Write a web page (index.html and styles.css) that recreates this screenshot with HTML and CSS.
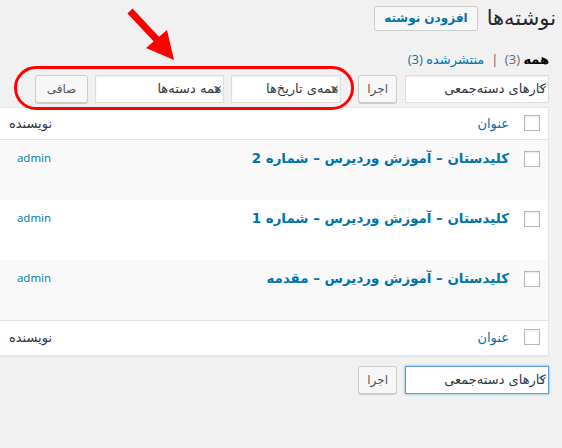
FILE: index.html
```html
<!DOCTYPE html>
<html lang="fa" dir="rtl">
  <head>
    <meta charset="UTF-8" />
    <title>نوشته‌ها</title>
    <link rel="stylesheet" href="styles.css">
  </head>
  <body>
    <div class="wrap">
      <div class="page-head">
        <h1>نوشته‌ها</h1>
        <a class="title-action" href="#">افزودن نوشته</a>
      </div>

      <ul class="subsubsub">
        <li><b>همه</b> <span class="count">(3)</span> <span class="sep">|</span></li>
        <li><a href="#">منتشرشده <span class="num">(3)</span></a></li>
      </ul>

      <div class="tablenav">
        <div class="select bulk">کارهای دسته‌جمعی</div>
        <button type="button" class="btn">اجرا</button>
        <div class="filters">
          <div class="select date">همه‌ی تاریخ‌ها</div>
          <div class="select cat">همه دسته‌ها</div>
          <button type="button" class="btn btn-filter">صافی</button>
        </div>
      </div>

      <table class="posts">
        <thead>
          <tr>
            <td class="col-cb"><span class="cb"></span></td>
            <th class="col-title"><a href="#">عنوان</a></th>
            <th class="col-author">نویسنده</th>
          </tr>
        </thead>
        <tbody>
          <tr class="alt">
            <td class="col-cb"><span class="cb"></span></td>
            <td class="col-title"><a class="row-title" href="#">کلیدستان – آموزش وردیرس – شماره 2</a></td>
            <td class="col-author"><a href="#">admin</a></td>
          </tr>
          <tr>
            <td class="col-cb"><span class="cb"></span></td>
            <td class="col-title"><a class="row-title" href="#">کلیدستان – آموزش وردیرس – شماره 1</a></td>
            <td class="col-author"><a href="#">admin</a></td>
          </tr>
          <tr class="alt">
            <td class="col-cb"><span class="cb"></span></td>
            <td class="col-title"><a class="row-title" href="#">کلیدستان – آموزش وردیرس – مقدمه</a></td>
            <td class="col-author"><a href="#">admin</a></td>
          </tr>
        </tbody>
        <tfoot>
          <tr>
            <td class="col-cb"><span class="cb"></span></td>
            <th class="col-title"><a href="#">عنوان</a></th>
            <th class="col-author">نویسنده</th>
          </tr>
        </tfoot>
      </table>

      <div class="tablenav bottom">
        <div class="select bulk focus">کارهای دسته‌جمعی</div>
        <button type="button" class="btn">اجرا</button>
      </div>
    </div>

    <!-- red annotation drawn over the screenshot -->
    <svg class="markup" width="562" height="120" viewBox="0 0 562 120">
      <rect x="15.5" y="67.5" width="337" height="41" rx="20.5" fill="none" stroke="#f00" stroke-width="3" />
      <line x1="130" y1="11" x2="160" y2="43" stroke="#f00" stroke-width="7" />
      <polygon points="174,60 167,30 146,48" fill="#f00" />
    </svg>
  </body>
</html>
```

FILE: styles.css
```css
body {
  margin: 0;
  background: #f1f1f1;
  color: #444;
  font-family: "Open Sans", "DejaVu Sans", sans-serif;
  font-size: 13px;
  direction: rtl;
  position: relative;
  overflow: hidden;
}
a {
  color: #0073aa;
  text-decoration: none;
}
.wrap {
  margin: 0 13px 0 0;
}
.page-head {
  display: flex;
  align-items: center;
  margin-right: -7px;
  padding-top: 5px;
}
h1 {
  margin: 0 0 0 9px;
  font-family: "DejaVu Sans", sans-serif;
  font-size: 21px;
  font-weight: normal;
  line-height: 27px;
  color: #23282d;
}
.title-action {
  display: inline-block;
  padding: 0 9px;
  height: 23px;
  line-height: 23px;
  border: 1px solid #ccc;
  border-radius: 2px;
  background: #f7f7f7;
  font-family: "DejaVu Sans", sans-serif;
  font-weight: bold;
  font-size: 12px;
}
.subsubsub {
  list-style: none;
  margin: 18px 0 0;
  padding: 0;
  display: flex;
  gap: 4px;
  font-size: 13px;
  line-height: 18px;
  color: #666;
}
.subsubsub b {
  color: #000;
}
.subsubsub .sep {
  margin: 0 3px;
}
.tablenav {
  display: flex;
  align-items: center;
  height: 28px;
  margin-top: 7px;
  margin-bottom: 4px;
}
.filters {
  display: flex;
  align-items: center;
  gap: 7px;
  margin-right: 17px;
}
.select {
  position: relative;
  box-sizing: border-box;
  height: 28px;
  line-height: 26px;
  padding: 0 2px 0 6px;
  border: 1px solid #ddd;
  background: #fff;
  box-shadow: inset 0 1px 2px rgba(0, 0, 0, 0.07);
  font-family: "DejaVu Sans", sans-serif;
  font-size: 13px;
  color: #32373c;
  white-space: nowrap;
  overflow: hidden;
}
.select::after {
  content: "";
  position: absolute;
  right: 3px;
  top: 8px;
  width: 4px;
  height: 4px;
  border-right: 1.5px solid #555;
  border-bottom: 1.5px solid #555;
  transform: rotate(45deg);
}
.bulk {
  width: 144px;
  margin-left: 8px;
}
.date {
  width: 110px;
}
.cat {
  width: 129px;
}
.focus {
  border-color: #5b9dd9;
  box-shadow: 0 0 2px rgba(30, 140, 190, 0.8);
}
.btn {
  box-sizing: border-box;
  height: 28px;
  padding: 0 8px;
  border: 1px solid #ccc;
  border-radius: 3px;
  background: #f7f7f7;
  box-shadow: 0 1px 0 #ccc;
  color: #555;
  font-family: "DejaVu Sans", sans-serif;
  font-size: 12px;
}
.btn-filter {
  padding: 0 11px;
}
.posts {
  width: calc(100% + 2px);
  margin-right: 0;
  margin-left: -2px;
  border-spacing: 0;
  border: 1px solid #e5e5e5;
  background: #fff;
  box-shadow: 0 1px 1px rgba(0, 0, 0, 0.04);
  table-layout: fixed;
}
.posts th,
.posts td {
  text-align: right;
  vertical-align: top;
  font-weight: normal;
  font-family: "DejaVu Sans", sans-serif;
  font-size: 13px;
  line-height: 18px;
}
.posts thead th,
.posts thead td {
  padding: 7px 5px 6px 10px;
  border-bottom: 1px solid #e1e1e1;
}
.posts tfoot th,
.posts tfoot td {
  padding: 8px 5px 8px 10px;
  border-top: 1px solid #e1e1e1;
}
.posts tbody td {
  height: 60px;
  box-sizing: border-box;
  padding: 9px 5px 0 10px;
}
.posts tbody tr.alt {
  background: #f9f9f9;
}
.posts .col-cb {
  width: 34px;
  box-sizing: border-box;
  padding-right: 8px;
  padding-left: 10px;
}
.posts .col-author {
  width: 45px;
  padding-right: 8px;
  padding-left: 8px;
  color: #32373c;
}
.posts tbody .col-author {
  font-family: "Open Sans", sans-serif;
  font-size: 11.5px;
}
.posts tbody .col-author a {
  margin-right: 1px;
}
.posts tbody .col-cb {
  padding-top: 11px;
}
.cb {
  display: block;
  width: 16px;
  height: 16px;
  box-sizing: border-box;
  border: 1px solid #b4b9be;
  background: #fff;
  box-shadow: inset 0 1px 2px rgba(0, 0, 0, 0.1);
}
.row-title {
  font-weight: bold;
  font-size: 13.4px;
  line-height: 20px;
}
.tablenav.bottom {
  margin-top: 10px;
}
.markup {
  position: absolute;
  left: 0;
  top: 0;
}
```
